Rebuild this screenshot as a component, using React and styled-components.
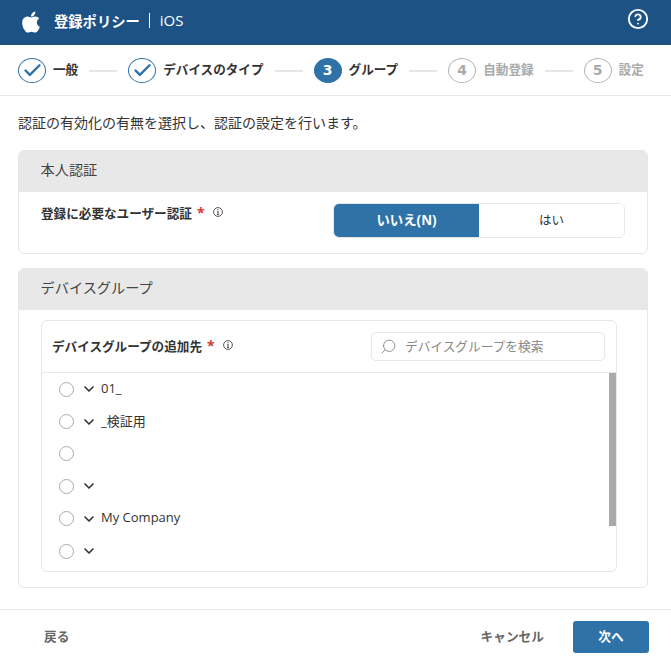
import styled, { createGlobalStyle } from "styled-components";
import { FaApple } from "react-icons/fa";
import { ChevronDown, CircleHelp, Search, Check } from "lucide-react";

const GlobalStyle = createGlobalStyle`
  html, body {
    margin: 0;
    padding: 0;
    background: #fff;
  }
  body {
    font-family: "Open Sans", "Noto Sans CJK JP", sans-serif;
    color: #333;
  }
  * { box-sizing: border-box; }
`;

const Page = styled.div`
  width: 671px;
  height: 664px;
  display: flex;
  flex-direction: column;
  overflow: hidden;
`;

const Header = styled.header`
  height: 45px;
  flex: none;
  background: #1d5285;
  color: #fff;
  display: flex;
  align-items: center;
  padding: 0 22px 0 19px;
  svg {
    margin-top: -2px;
  }
`;

const Title = styled.div`
  display: flex;
  align-items: center;
  font-size: 14.3px;
  font-weight: 700;
  margin-left: 11px;
  padding-bottom: 4px;
`;

const Platform = styled.span`
  font-size: 15px;
  font-weight: 400;
  margin-left: 9px;
  padding-left: 10px;
  border-left: 1px solid #fff;
  line-height: 15px;
`;

const HelpButton = styled.div`
  margin-left: auto;
  display: flex;
  margin-top: -6px;
`;

const Stepper = styled.nav`
  height: 51px;
  flex: none;
  display: flex;
  align-items: center;
  padding: 0 18px;
  border-bottom: 1px solid #e6e6e6;
`;

const StepCircle = styled.span`
  width: 28px;
  height: 25px;
  border-radius: 50%;
  flex: none;
  display: flex;
  align-items: center;
  justify-content: center;
  font-family: "DejaVu Sans", sans-serif;
  font-size: 14px;
  font-weight: 700;
  color: ${(p) => (p.$state === "current" ? "#fff" : p.$state === "done" ? "#2e72a8" : "#aaa")};
  background: ${(p) => (p.$state === "current" ? "#2e72a8" : "#fff")};
  border: ${(p) => (p.$state === "done" ? 1.5 : 1)}px solid
    ${(p) => (p.$state === "current" || p.$state === "done" ? "#2e72a8" : "#b5b5b5")};
`;

const StepLabel = styled.span`
  margin-left: 7px;
  padding-bottom: 4px;
  font-size: 12.6px;
  font-weight: 700;
  white-space: nowrap;
  color: ${(p) => (p.$muted ? "#aaa" : "#333")};
`;

const StepLine = styled.span`
  width: 28px;
  height: 2px;
  flex: none;
  background: #e6e6e6;
  margin: 1px 11px 0;
`;

const Body = styled.main`
  flex: 1;
  padding: 0 18px;
  display: flex;
  flex-direction: column;
`;

const Intro = styled.p`
  margin: 0;
  height: 54px;
  flex: none;
  display: flex;
  align-items: center;
  padding-bottom: 3px;
  font-size: 14px;
`;

const Panel = styled.section`
  width: 630px;
  border: 1px solid #e6e6e6;
  border-radius: 6px;
  overflow: hidden;
  margin-bottom: 14px;
`;

const PanelHeading = styled.h2`
  margin: -1px -1px 0;
  height: 42px;
  background: #e8e8e8;
  display: flex;
  align-items: center;
  padding: 0 0 4px 22.5px;
  font-size: 14.2px;
  font-weight: 400;
  color: #444;
`;

const AuthRow = styled.div`
  height: 61px;
  display: flex;
  justify-content: space-between;
  padding: 10px 22px 0;
`;

const FieldLabel = styled.div`
  display: flex;
  align-items: center;
  height: 20px;
  font-size: 12.6px;
  font-weight: 700;
`;

const GroupLabel = styled(FieldLabel)`
  margin-top: -3px;
`;

const Required = styled.span`
  color: #d8392b;
  margin: 0 8px 0 5px;
  font-size: 14px;
`;

const Toggle = styled.div`
  width: 292px;
  height: 35px;
  margin-top: 1px;
  display: flex;
  border: 1px solid #e6e6e6;
  border-radius: 6px;
  overflow: hidden;
`;

const ToggleOption = styled.div`
  flex: ${(p) => (p.$on ? "0 0 145px" : 1)};
  display: flex;
  align-items: center;
  justify-content: center;
  padding-bottom: 3px;
  font-size: ${(p) => (p.$on ? 13.4 : 12.5)}px;
  font-weight: ${(p) => (p.$on ? 700 : 400)};
  color: ${(p) => (p.$on ? "#fff" : "#333")};
  background: ${(p) => (p.$on ? "#2e72a8" : "#fff")};
`;

const GroupBody = styled.div`
  padding: 10px 30px 15px 22px;
`;

const GroupBox = styled.div`
  height: 252px;
  border: 1px solid #e6e6e6;
  border-radius: 6px;
  overflow: hidden;
  display: flex;
  flex-direction: column;
`;

const GroupHead = styled.div`
  height: 52px;
  flex: none;
  border-bottom: 1px solid #e6e6e6;
  display: flex;
  align-items: center;
  justify-content: space-between;
  padding: 0 11px 0 10px;
`;

const SearchBox = styled.div`
  width: 234px;
  height: 29px;
  border: 1px solid #e6e6e6;
  border-radius: 5px;
  display: flex;
  align-items: center;
  padding-left: 8px;
  font-size: 12.7px;
  color: #888;
  svg {
    transform: scaleX(-1);
    margin-right: 8px;
  }
`;

const Placeholder = styled.span`
  padding-bottom: 3px;
`;

const TreeArea = styled.div`
  flex: 1;
  display: flex;
  min-height: 0;
`;

const Tree = styled.ul`
  flex: 1;
  list-style: none;
  margin: 0;
  padding: 0 0 0 17px;
`;

const TreeRow = styled.li`
  height: 32.4px;
  display: flex;
  align-items: center;
  font-size: 13px;
`;

const RowLabel = styled.span`
  margin-left: 4px;
  padding-bottom: 3px;
`;

const Radio = styled.span`
  width: 15px;
  height: 15px;
  border: 1px solid #aaa;
  border-radius: 50%;
  flex: none;
  margin-right: 7px;
`;

const Scrollbar = styled.div`
  width: 7px;
  height: 153px;
  background: #aaa;
`;

const Footer = styled.footer`
  height: 55px;
  flex: none;
  border-top: 1px solid #e6e6e6;
  display: flex;
  align-items: center;
  padding: 0 22px 0 44px;
  font-size: 12.7px;
  font-weight: 700;
  color: #666;
`;

const BackLink = styled.span`
  padding-bottom: 3px;
`;

const CancelLink = styled.span`
  margin-left: auto;
  margin-right: 29px;
  padding-bottom: 3px;
`;

const NextButton = styled.button`
  width: 76px;
  height: 32px;
  border: 0;
  border-radius: 3px;
  padding: 0 0 3px;
  background: #2e72a8;
  color: #fff;
  font: inherit;
  font-weight: 700;
`;

function InfoIcon() {
  return (
    <svg width="10" height="10" viewBox="0 0 10 10" fill="none" stroke="#444">
      <circle cx="5" cy="5" r="4.4" strokeWidth="0.9" />
      <path d="M5 4.2V7.6M4.1 7.6H5.9M4.2 4.3H5" strokeWidth="1" />
      <path d="M5 2.2V3.2" strokeWidth="1" />
    </svg>
  );
}

const rows = [
  { label: "01_", caret: true },
  { label: "_検証用", caret: true },
  { label: "", caret: false },
  { label: "", caret: true },
  { label: "My Company", caret: true },
  { label: "", caret: true },
];

export default function App() {
  return (
    <Page>
      <GlobalStyle />
      <Header>
        <FaApple size={24} />
        <Title>
          登録ポリシー
          <Platform>iOS</Platform>
        </Title>
        <HelpButton>
          <CircleHelp size={22} strokeWidth={2} />
        </HelpButton>
      </Header>
      <Stepper>
        <StepCircle $state="done">
          <Check size={21} strokeWidth={2.8} />
        </StepCircle>
        <StepLabel>一般</StepLabel>
        <StepLine />
        <StepCircle $state="done">
          <Check size={21} strokeWidth={2.8} />
        </StepCircle>
        <StepLabel>デバイスのタイプ</StepLabel>
        <StepLine />
        <StepCircle $state="current">3</StepCircle>
        <StepLabel>グループ</StepLabel>
        <StepLine />
        <StepCircle $state="todo">4</StepCircle>
        <StepLabel $muted>自動登録</StepLabel>
        <StepLine />
        <StepCircle $state="todo">5</StepCircle>
        <StepLabel $muted>設定</StepLabel>
      </Stepper>
      <Body>
        <Intro>認証の有効化の有無を選択し、認証の設定を行います。</Intro>
        <Panel>
          <PanelHeading>本人認証</PanelHeading>
          <AuthRow>
            <FieldLabel>
              登録に必要なユーザー認証
              <Required>*</Required>
              <InfoIcon />
            </FieldLabel>
            <Toggle>
              <ToggleOption $on>いいえ(N)</ToggleOption>
              <ToggleOption>はい</ToggleOption>
            </Toggle>
          </AuthRow>
        </Panel>
        <Panel>
          <PanelHeading>デバイスグループ</PanelHeading>
          <GroupBody>
            <GroupBox>
              <GroupHead>
                <GroupLabel>
                  デバイスグループの追加先
                  <Required>*</Required>
                  <InfoIcon />
                </GroupLabel>
                <SearchBox>
                  <Search size={17} strokeWidth={1.3} />
                  <Placeholder>デバイスグループを検索</Placeholder>
                </SearchBox>
              </GroupHead>
              <TreeArea>
                <Tree>
                  {rows.map((row, i) => (
                    <TreeRow key={i}>
                      <Radio />
                      {row.caret && <ChevronDown size={16} strokeWidth={2.5} />}
                      {row.label && <RowLabel>{row.label}</RowLabel>}
                    </TreeRow>
                  ))}
                </Tree>
                <Scrollbar />
              </TreeArea>
            </GroupBox>
          </GroupBody>
        </Panel>
      </Body>
      <Footer>
        <BackLink>戻る</BackLink>
        <CancelLink>キャンセル</CancelLink>
        <NextButton>次へ</NextButton>
      </Footer>
    </Page>
  );
}
